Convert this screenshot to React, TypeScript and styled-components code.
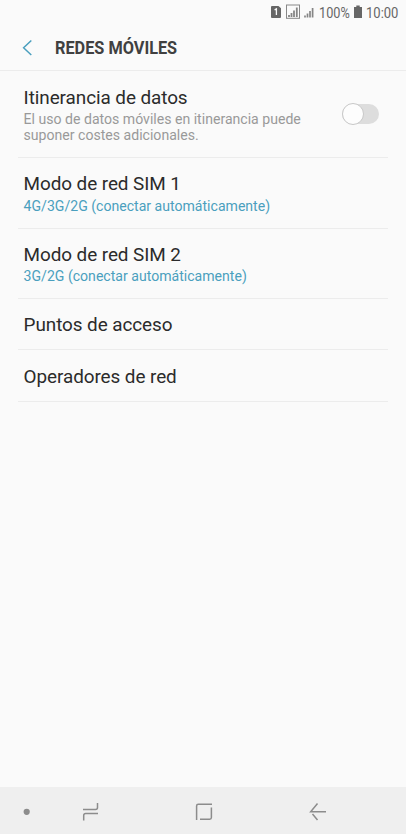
import React from 'react';
import styled, { createGlobalStyle } from 'styled-components';

const GlobalStyle = createGlobalStyle`
  * { box-sizing: border-box; }
  html, body { margin: 0; background: #fafafa; }
  body { font-family: Roboto, "Liberation Sans", sans-serif; }
`;

const Screen = styled.div`
  display: flex;
  flex-direction: column;
  width: 406px;
  height: 834px;
  background: #fafafa;
  overflow: hidden;
`;

const StatusBar = styled.div`
  display: flex;
  align-items: center;
  height: 25px;
  padding-left: 270px;
  color: #666;
  font-size: 15.5px;
`;

const StatusIcons = styled.svg`
  flex: none;
  width: 48.5px;
  height: 25px;
`;

const Battery = styled.svg`
  flex: none;
  width: 12px;
  height: 25px;
`;

const Condensed = styled.span<{ $width: number; $scale: number }>`
  flex: none;
  width: ${(p) => p.$width}px;
  white-space: nowrap;
  transform: scaleX(${(p) => p.$scale});
  transform-origin: left center;
`;

const Header = styled.header`
  display: flex;
  align-items: center;
  height: 46px;
  padding-left: 22px;
  border-bottom: 1px solid #ececec;
`;

const BackIcon = styled.svg`
  width: 12px;
  height: 18px;
  margin-right: 21px;
`;

const Title = styled.h1`
  display: flex;
  margin: 0;
  padding-top: 1px;
  font-size: 18.6px;
  line-height: 22px;
  font-weight: 700;
  color: #404040;
`;

const List = styled.main`
  flex: 1;
  padding: 0 18px;
`;

const Row = styled.section<{ $height: number }>`
  display: flex;
  align-items: center;
  justify-content: space-between;
  height: ${(p) => p.$height}px;
  padding: 0 9px 0 5.6px;
  border-bottom: 1px solid #ececec;
`;

const Texts = styled.div<{ $drop: number }>`
  padding-top: ${(p) => p.$drop}px;
`;

const Label = styled.div`
  font-size: 18.9px;
  letter-spacing: -0.07px;
  line-height: 24px;
  color: #2b2b2b;
`;

const Detail = styled.div<{ $accent?: boolean }>`
  font-size: 14.08px;
  line-height: 16.5px;
  padding-top: ${(p) => (p.$accent ? 1.5 : 1)}px;
  color: ${(p) => (p.$accent ? '#4a9fbe' : '#999')};
  white-space: pre-line;
`;

const Track = styled.div`
  display: flex;
  align-items: center;
  width: 37px;
  height: 20px;
  border-radius: 10px;
  background: #ddd;
`;

const Knob = styled.div`
  width: 22px;
  height: 22px;
  flex: none;
  border: 1px solid #c8c8c8;
  border-radius: 50%;
  background: #fdfdfd;
`;

const NavBar = styled.nav`
  height: 47px;
  background: #efefef;
`;

const NavIcons = styled.svg`
  display: block;
  width: 406px;
  height: 47px;
`;

interface Setting {
  label: string;
  detail?: string;
  accent?: boolean;
  toggle?: boolean;
  height: number;
  drop: number;
}

const settings: Setting[] = [
  {
    label: 'Itinerancia de datos',
    detail: 'El uso de datos móviles en itinerancia puede\nsuponer costes adicionales.',
    toggle: true,
    height: 87,
    drop: 1,
  },
  { label: 'Modo de red SIM 1', detail: '4G/3G/2G (conectar automáticamente)', accent: true, height: 71, drop: 0.6 },
  { label: 'Modo de red SIM 2', detail: '3G/2G (conectar automáticamente)', accent: true, height: 70, drop: 0.6 },
  { label: 'Puntos de acceso', height: 51, drop: 2 },
  { label: 'Operadores de red', height: 52, drop: 2 },
];

export default function App() {
  return (
    <Screen>
      <GlobalStyle />
      <StatusBar>
        <StatusIcons viewBox="0 0 48.5 25">
          <path d="M2 6h6.5L11 8.3V17a1 1 0 0 1-1 1H2a1 1 0 0 1-1-1V7a1 1 0 0 1 1-1z" fill="#666" />
          <path d="M4.6 9.8L6.4 8.9V15" fill="none" stroke="#fafafa" strokeWidth="1.3" />
          <rect x="16.5" y="5" width="13" height="13.3" fill="none" stroke="#888" />
          <path d="M19 17v-2M21.5 17v-4M24 17v-6.5M26.8 17V7.500" stroke="#858585" strokeWidth="1.8" />
          <path d="M35 17.5v-2M37.5 17.5v-4M40 17.5v-6.500M42.6 17.500V8" stroke="#858585" strokeWidth="1.7" />
        </StatusIcons>
        <Condensed $width={35} $scale={0.82}>100%</Condensed>
        <Battery viewBox="0 0 12 25">
          <path d="M2.3 5.5h3.4V7H8v11H0V7h2.3z" fill="#666" />
        </Battery>
        <Condensed $width={34} $scale={0.84}>10:00</Condensed>
      </StatusBar>
      <Header>
        <BackIcon viewBox="0 0 12 18">
          <path d="M9.3 1.5L1.6 8.8l7.7 7.2" fill="none" stroke="#4a9fbe" strokeWidth="1.5" />
        </BackIcon>
        <Title>
          <Condensed $width={122} $scale={0.876}>REDES MÓVILES</Condensed>
        </Title>
      </Header>
      <List>
        {settings.map((s) => (
          <Row key={s.label} $height={s.height}>
            <Texts $drop={s.drop}>
              <Label>{s.label}</Label>
              {s.detail && <Detail $accent={s.accent}>{s.detail}</Detail>}
            </Texts>
            {s.toggle && (
              <Track>
                <Knob />
              </Track>
            )}
          </Row>
        ))}
      </List>
      <NavBar>
        <NavIcons viewBox="0 0 406 47" fill="none" stroke="#8c8c8c" strokeWidth="1.5">
          <circle cx="26.7" cy="24.8" r="3.1" fill="#8c8c8c" stroke="none" />
          <path d="M83 22.6h12.5q2 0 2-2V16M98 26.4H85.7q-2 0-2 2V33.5" />
          <path d="M212 17.2h-13.7q-1.7 0-1.7 1.7V33M200 32.3h9.7q1.7 0 1.7-1.7V20.5" />
          <path d="M326 24.8h-15.3L317.500 16.500M312.500 27l5 6" />
        </NavIcons>
      </NavBar>
    </Screen>
  );
}
